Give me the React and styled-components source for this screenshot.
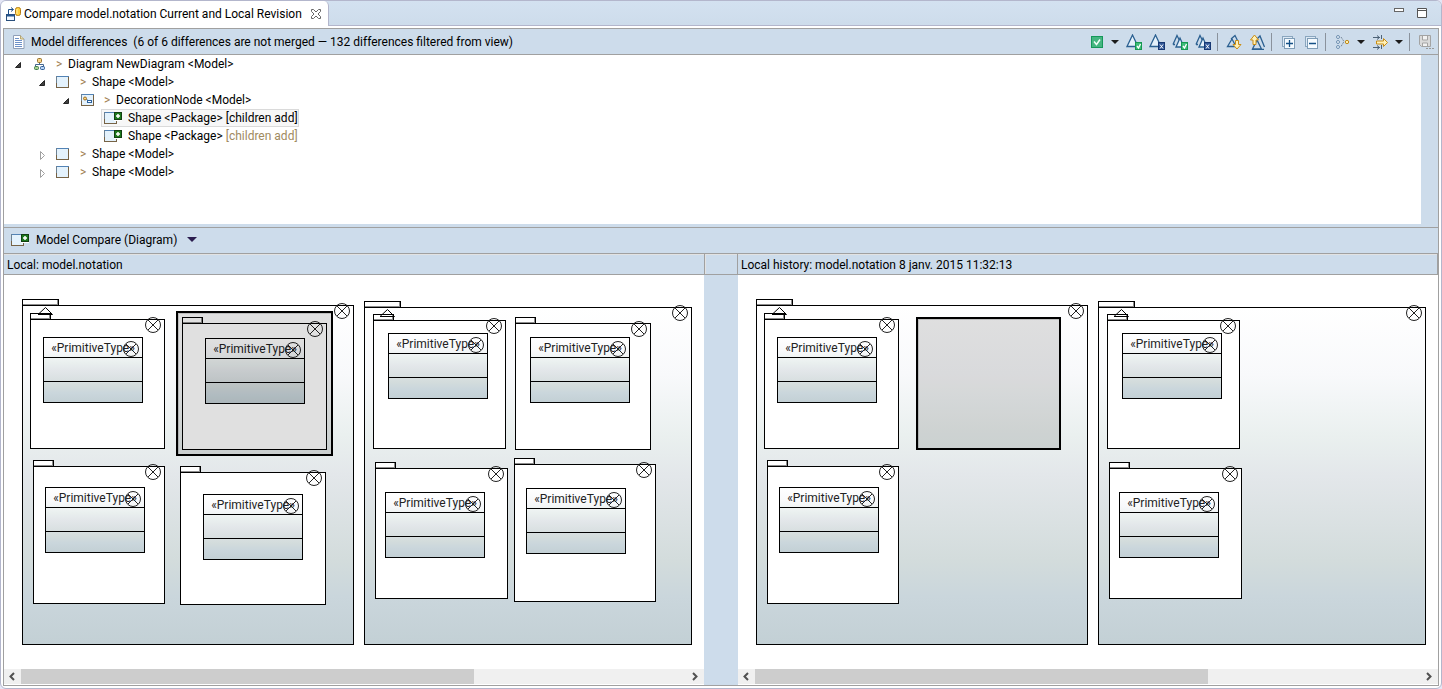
import React, { useState } from "react";
import styled, { createGlobalStyle } from "styled-components";

const GlobalStyle = createGlobalStyle`
  * {
    box-sizing: border-box;
  }
  body {
    margin: 0;
    background: #e4e6f5;
    color: #000;
    font-family: Roboto, "Open Sans", sans-serif;
    font-size: 12px;
    line-height: 16px;
  }
  button {
    font: inherit;
    color: inherit;
    background: none;
    border: none;
    padding: 0;
  }
  svg {
    display: block;
    flex: none;
  }
`;

const Window = styled.div`
  display: flex;
  flex-direction: column;
  min-height: 100vh;
  padding-bottom: 2px;
  background: #fff;
  border: 1px solid #b3b6cc;
  border-radius: 6px;
  overflow: hidden;
`;

const TabBar = styled.header`
  display: flex;
  height: 25px;
  background: linear-gradient(#d3e1f0, #cddceb);
`;

const Tab = styled.div`
  display: flex;
  align-items: center;
  padding: 0 6px 0 4px;
  background: #fff;
  border-right: 1px solid #b3b6cc;
  border-radius: 5px 5px 0 0;
`;

const TabTitle = styled.h1`
  margin: 0 8px 0 3px;
  font-size: 12px;
  font-weight: 400;
  white-space: nowrap;
`;

const TabControls = styled.div`
  display: flex;
  flex: 1;
  align-items: flex-start;
  justify-content: flex-end;
  gap: 13px;
  padding: 7px 13px 0 0;
  border-bottom: 1px solid #b3b6cc;
`;

const Frame = styled.main`
  display: flex;
  flex: 1;
  flex-direction: column;
  margin: 2px 2px 0;
  border: 1px solid #a0a0a0;
`;

const SectionBar = styled.div`
  display: flex;
  align-items: center;
  gap: 5px;
  height: 26px;
  padding-left: 8px;
  background: #cddceb;
  border-bottom: 1px solid #a0a0a0;
`;

const SectionTitle = styled.h2`
  margin: 0;
  font-size: 12px;
  font-weight: 400;
  white-space: pre;
`;

const Toolbar = styled.div`
  display: flex;
  align-items: center;
  margin-left: auto;
  padding-right: 1px;
`;

const Tool = styled.button`
  width: 23px;
  padding: 0 3px 0 4px;
`;

const Caret = styled.button`
  display: flex;
  justify-content: center;
  width: 15px;
`;

const Separator = styled.span`
  width: 1px;
  height: 18px;
  margin: 0 4px 0 3px;
  background: #8a929c;
`;

const TreePanel = styled.div`
  height: 172px;
  padding-right: 17px;
  background: #cddceb;
  border-bottom: 3px solid #cddceb;
`;

const Tree = styled.ul`
  height: 100%;
  margin: 0;
  padding: 0;
  list-style: none;
  background: #fff;
`;

const TreeRow = styled.li`
  display: flex;
  align-items: center;
  height: 18px;
  padding-left: ${(props) => 8 + props.$level * 24}px;
`;

const Expander = styled.button`
  width: 12px;
  height: 12px;
  margin-right: 5px;
`;

const TreeItem = styled.button`
  display: flex;
  align-items: center;
  height: 18px;
  border: 1px solid ${(props) => (props.$selected ? "#dadada" : "transparent")};
  background: ${(props) => (props.$selected ? "#f7f7f7" : "none")};
  white-space: pre;
`;

const TreeIcon = styled.span`
  width: 26px;
`;

const Marker = styled.span`
  width: 12px;
  color: #a08050;
  text-align: left;
`;

const Note = styled.span`
  color: ${(props) => (props.$muted ? "#a08a60" : "#000")};
`;

const CompareBar = styled(SectionBar)`
  gap: 7px;
  height: 27px;
  padding: 0 0 2px 5px;
  border-top: 1px solid #a0a0a0;
`;

const Columns = styled.div`
  display: grid;
  flex: 1;
  grid-template-columns: minmax(0, 1fr) 34px minmax(0, 1fr);
  grid-template-rows: 21px 1fr;
`;

const SideTitle = styled.h3`
  margin: 0;
  padding: 3px 3px 0;
  background: #cddceb;
  border-bottom: 1px solid #a0a0a0;
  box-shadow: inset 0 1px #e2e2e2;
  font-size: 12px;
  font-weight: 400;
  white-space: nowrap;

  &:last-of-type {
    border-right: 1px solid #a0a0a0;
  }
`;

const GutterTitle = styled.div`
  background: #cddceb;
  border: solid #a0a0a0;
  border-width: 0 1px 1px;
  box-shadow: inset 1px 1px #e2e2e2;
`;

const Gutter = styled.div`
  background: #cddceb;
`;

const Side = styled.section`
  display: flex;
  flex-direction: column;
`;

const Canvas = styled.div`
  position: relative;
  flex: 1;
  min-height: 394px;
  overflow: hidden;
  background: #fff;
`;

const Scrollbar = styled.div`
  display: flex;
  height: 16px;
  border-bottom: 1px solid #fff;
  background: #f0f0f0;
`;

const ScrollButton = styled.button`
  display: flex;
  align-items: center;
  justify-content: center;
  width: 17px;
`;

const Track = styled.div`
  flex: 1;
`;

const Thumb = styled.div`
  width: 68%;
  height: 100%;
  background: #cdcdcd;
`;

const shade = "linear-gradient(#fff, #f8f9fb 20%, #eaf0ef 38%, #e3e7ea 50%, #d3dcdc 75%, #cad6dc 86%, #c3d0d5)";

const Node = styled.div`
  position: absolute;
  left: ${(props) => props.$x}px;
  top: ${(props) => props.$y}px;
  width: ${(props) => props.$w}px;
  height: ${(props) => props.$h}px;
`;

const PackageBox = styled(Node)`
  border: 1px solid #000;
  background: ${(props) => (props.$shaded ? shade : "#fff")};
`;

const PackageTab = styled.span`
  position: absolute;
  left: -1px;
  top: -7px;
  width: ${(props) => (props.$wide ? 37 : 21)}px;
  height: 6px;
  border: 1px solid #000;
  border-bottom: none;
  background: #fff;
  box-shadow: inset -1px -1px #8c8c8c;
`;

const ClassBox = styled(Node)`
  display: grid;
  grid-template-rows: 20px 24px 1fr;
  width: 100px;
  height: 66px;
  border: 1px solid #000;
  background: ${shade};
`;

const Compartment = styled.div`
  border-bottom: ${(props) => (props.$last ? "none" : "1px solid #000")};
  color: #222;
  line-height: 20px;
  text-align: center;
  white-space: nowrap;
`;

const Badge = styled.svg`
  position: absolute;
  right: 3px;
  top: ${(props) => props.$top}px;
  z-index: 1;
`;

const Inherit = styled.svg`
  position: absolute;
  left: 14px;
  top: 0;
  z-index: 1;
`;

const Highlight = styled(Node)`
  z-index: 2;
  border: 2px solid #000;
  background: rgba(0, 0, 0, 0.12);
  box-shadow: inset 1px 1px rgba(0, 0, 0, 0.15);
`;

const CompareIcon = () => (
  <svg width="16" height="16">
    <path d="M3.5 9V3.5H8M6 1.5l2.5 2L6 5.5" fill="none" stroke="#1d4f88" />
    <rect x="1.5" y="8.5" width="8" height="6" fill="#f4f9ff" stroke="#2a4f7c" />
    <path d="M2 9.5h7" stroke="#25568f" strokeWidth="2" />
    <rect x="10.5" y="1.5" width="5" height="8" rx="2" fill="#ffcf3f" stroke="#b57b12" />
    <path d="M12 3v5" stroke="#fff2ae" />
  </svg>
);

const CloseIcon = () => (
  <svg width="12" height="12">
    <path
      d="M1.5 1.5h2l2.500 2.500 2.500-2.500h2v2l-2.500 2.500 2.500 2.500v2h-2l-2.500-2.500-2.500 2.500h-2v-2l2.500-2.500-2.500-2.500z"
      fill="#fff"
      stroke="#666"
    />
  </svg>
);

const DocIcon = () => (
  <svg width="14" height="16">
    <path d="M1.500 1.500h7l3.500 3.500v9.500H1.500z" fill="#fff" stroke="#8f9fb8" />
    <path d="M8.500 1.500V5H12" fill="#e8dcae" stroke="#b5a671" />
    <path d="M3 4.500h4M3 6.500h7M3 8.500h7M3 10.500h7M3 12.500h7" stroke="#6d91c8" />
  </svg>
);

const DiagramIcon = () => (
  <svg width="20" height="16">
    <path d="M9.500 6v3M5.500 11V8.500h8V11" fill="none" stroke="#45678f" />
    <rect x="7.500" y="2.500" width="4" height="4" rx="1" fill="#f7d487" stroke="#96702c" />
    <rect x="4.500" y="10.500" width="4" height="3" rx="1" fill="#a9d28e" stroke="#3f7a50" />
    <rect x="10.500" y="10.500" width="4" height="3" rx="1" fill="#b8d3f5" stroke="#2d5d96" />
  </svg>
);

const BoxFrame = ({ x }) => (
  <>
    <rect x={x} y="2" width="13" height="12" fill="#776345" />
    <path d={`M${x} 2.500h13`} stroke="#5383b5" />
    <path d={`M${x + 0.5} 2v7`} stroke="#6d8192" />
    <rect x={x + 1} y="3" width="11" height="10" fill="#e4f2fc" />
  </>
);

const ShapeIcon = () => (
  <svg width="20" height="16">
    <BoxFrame x={2} />
  </svg>
);

const DecorationIcon = () => (
  <svg width="20" height="16">
    <BoxFrame x={3} />
    <path d="M8 7l3 2" stroke="#6b7c91" />
    <circle cx="7" cy="6.500" r="1.500" fill="#ffd67a" stroke="#a16f21" />
    <rect x="9.500" y="8.500" width="4" height="2" fill="#fff" stroke="#2e639f" />
  </svg>
);

const AddedIcon = () => (
  <svg width="20" height="16">
    <BoxFrame x={2} />
    <rect x="12" y="2" width="8" height="9" fill="#fff" />
    <rect x="12.500" y="2.500" width="7" height="7" fill="#1d7a1d" stroke="#123f12" />
    <path d="M16 4v4M14 6h4" stroke="#fff" strokeWidth="1.500" />
  </svg>
);

const OpenArrow = () => (
  <svg width="12" height="12">
    <path d="M8.500 4.500v5h-5z" fill="#404040" stroke="#262626" />
  </svg>
);

const ClosedArrow = () => (
  <svg width="12" height="12">
    <path d="M4.500 3.500v8l4-4z" fill="#fff" stroke="#a0a0a0" />
  </svg>
);

const DownArrow = ({ size = 8, color = "#1c1c1c" }) => (
  <svg width={size} height={size / 2}>
    <path d={`M0 0h${size}l-${size / 2} ${size / 2}z`} fill={color} />
  </svg>
);

const Delta = ({ double, children }) => (
  <svg width="16" height="16" fill="none">
    {double ? (
      <>
        <path d="M1 10.500L5 1.500l3 6M1 10.500h2" stroke="#2b6091" strokeWidth="1.300" />
        <path d="M4 13L8 4l4 9z" fill="#e4f1fb" stroke="#2b6091" strokeWidth="1.300" />
      </>
    ) : (
      <path d="M1 12.500L6.500 1l5.500 11.500z" fill="#e4f1fb" stroke="#2b6091" strokeWidth="1.300" />
    )}
    {children}
  </svg>
);

const AcceptMark = () => (
  <>
    <rect x="9.500" y="8.500" width="6" height="7" fill="#3dbb79" stroke="#159850" />
    <path d="M11 12l1.500 2 2-4" stroke="#fff" strokeWidth="1.300" />
  </>
);

const RejectMark = () => (
  <>
    <rect x="9.500" y="8.500" width="6" height="7" fill="#315898" stroke="#173873" />
    <path d="M11 10.500l3 4M14 10.500l-3 4" stroke="#fff" />
  </>
);

const CheckIcon = () => (
  <svg width="16" height="16" fill="none">
    <rect x="3.500" y="2.500" width="11" height="11" fill="#45b681" stroke="#16985a" />
    <path d="M6 7.500l2.500 3 3.500-5" stroke="#f2fff7" strokeWidth="1.500" />
  </svg>
);

const NextIcon = () => (
  <svg width="16" height="16" fill="none">
    <path d="M1.500 12.500L6 5l4 7.500zM5 5l4-3.500 3 6" stroke="#2b6091" strokeWidth="1.300" />
    <path d="M9.500 6.500h3v4h2.500L11 15l-4-4.500h2.500z" fill="#fff1b8" stroke="#c98d14" />
  </svg>
);

const PreviousIcon = () => (
  <svg width="16" height="16" fill="none">
    <path d="M3.500 15L8 6l4.500 9zM8 5l3-3 4.500 11M3 15.500h12" stroke="#2b6091" strokeWidth="1.300" />
    <path d="M4 10.500V6H1.500L5.500 1l4 5H7v4.500z" fill="#fff1b8" stroke="#c98d14" />
  </svg>
);

const FoldIcon = ({ plus }) => (
  <svg width="16" height="16" fill="none">
    <rect x="2.500" y="2.500" width="10" height="10" fill="#dce9f5" stroke="#8aa6be" />
    <rect x="4.500" y="4.500" width="10" height="10" fill="#f5fbff" stroke="#7f9db7" />
    <path d={plus ? "M6 9.500h7M9.500 6v7" : "M6 9.500h7"} stroke="#145187" strokeWidth="1.300" />
  </svg>
);

const GroupIcon = () => (
  <svg width="16" height="16" fill="none">
    <g fill="#eaf3fb" stroke="#6e8fb0">
      <circle cx="4" cy="3" r="1.500" />
      <circle cx="4" cy="8" r="1.500" />
      <circle cx="4" cy="13" r="1.500" />
    </g>
    <path d="M7 3l3 4.500L7 12.500" stroke="#77889a" strokeDasharray="2 1" />
    <circle cx="13" cy="8" r="1.700" fill="#fff0ae" stroke="#c08a1c" />
  </svg>
);

const FilterIcon = () => (
  <svg width="16" height="16" fill="none">
    <path d="M1 3.500h7M1 13.500h7M5 1.500l2.500 2L5 5.500M5 11.500l2.500 2-2.500 2M9.500 1v4M9.500 11v4" stroke="#4d6276" />
    <path d="M4.500 7h7V4.500L15.500 8.500l-4 4V10h-7z" fill="#fff1b8" stroke="#c98d14" />
  </svg>
);

const SaveIcon = () => (
  <svg width="16" height="16" fill="none">
    <path d="M1.500 1.500h11v11h-9l-2-2z" fill="#dadada" stroke="#a3a3a3" />
    <path d="M4.500 2v4h5V2M4.500 12V9h5v3" fill="#f2f2f2" stroke="#a3a3a3" />
    <path d="M8 14.500h2M11 14.500h2M14 14.500h2" stroke="#999" />
  </svg>
);

const MinimizeIcon = () => (
  <svg width="10" height="4">
    <rect x="0.500" y="0.500" width="9" height="3" fill="#fff" stroke="#666" />
  </svg>
);

const MaximizeIcon = () => (
  <svg width="11" height="11">
    <path d="M0.500 0.500h9v9h-9zM0 2.500h10" fill="#fff" stroke="#555" />
  </svg>
);

const Chevron = ({ right }) => (
  <svg width="9" height="9">
    <path d={right ? "M2 1l3.500 3.500L2 8" : "M6 1L2.500 4.500 6 8"} fill="none" stroke="#505050" strokeWidth="2" />
  </svg>
);

const CrossBadge = ({ top }) => (
  <Badge $top={top} width="16" height="16" fill="none" stroke="#222">
    <circle cx="8" cy="8" r="7.500" />
    <path d="M3 3l10 10M13 3L3 13" />
  </Badge>
);

const PrimitiveType = ({ x, y }) => (
  <ClassBox $x={x} $y={y}>
    <Compartment>«PrimitiveType»</Compartment>
    <Compartment />
    <Compartment $last />
    <CrossBadge top={3} />
  </ClassBox>
);

const Package = ({ x, y, w, h, type }) => (
  <PackageBox $x={x} $y={y} $w={w} $h={h}>
    <PackageTab />
    <CrossBadge top={-3} />
    <PrimitiveType x={type[0]} y={type[1]} />
  </PackageBox>
);

const models = [
  {
    box: { $x: 18, $y: 30, $w: 332, $h: 340 },
    packages: [
      { id: "a1", x: 7, y: 13, w: 135, h: 130, type: [12, 17] },
      { id: "a2", x: 159, y: 17, w: 145, h: 127, type: [22, 14], localOnly: true },
      { id: "a3", x: 10, y: 160, w: 132, h: 138, type: [11, 20] },
      { id: "a4", x: 157, y: 166, w: 146, h: 133, type: [22, 21], localOnly: true },
    ],
  },
  {
    box: { $x: 360, $y: 32, $w: 328, $h: 338 },
    packages: [
      { id: "b1", x: 8, y: 12, w: 133, h: 129, type: [14, 12] },
      { id: "b2", x: 150, y: 15, w: 136, h: 127, type: [14, 13], localOnly: true },
      { id: "b3", x: 10, y: 160, w: 133, h: 131, type: [9, 23] },
      { id: "b4", x: 149, y: 156, w: 142, h: 138, type: [11, 23], localOnly: true },
    ],
  },
];

const tree = [
  { level: 0, open: true, icon: <DiagramIcon />, text: "Diagram NewDiagram <Model>" },
  { level: 1, open: true, icon: <ShapeIcon />, text: "Shape <Model>" },
  { level: 2, open: true, icon: <DecorationIcon />, text: "DecorationNode <Model>" },
  { level: 3, icon: <AddedIcon />, text: "Shape <Package>", note: "[children add]" },
  { level: 3, icon: <AddedIcon />, text: "Shape <Package>", note: "[children add]" },
  { level: 1, open: false, icon: <ShapeIcon />, text: "Shape <Model>" },
  { level: 1, open: false, icon: <ShapeIcon />, text: "Shape <Model>" },
];

const DiagramSide = ({ local, highlight }) => (
  <Side>
    <Canvas>
      {models.map((model) => (
        <PackageBox key={model.box.$x} $shaded {...model.box}>
          <PackageTab $wide />
          <CrossBadge top={-3} />
          <Inherit width="17" height="9" fill="none" stroke="#000">
            <path d="M1 8.500L8.500 1.500 15.500 8.500z" />
          </Inherit>
          {model.packages
            .filter((item) => local || !item.localOnly)
            .map(({ id, localOnly, ...item }) => (
              <Package key={id} {...item} />
            ))}
        </PackageBox>
      ))}
      <Highlight {...highlight} />
    </Canvas>
    <Scrollbar>
      <ScrollButton aria-label="Scroll left">
        <Chevron />
      </ScrollButton>
      <Track>
        <Thumb />
      </Track>
      <ScrollButton aria-label="Scroll right">
        <Chevron right />
      </ScrollButton>
    </Scrollbar>
  </Side>
);

const App = () => {
  const [selected, setSelected] = useState(3);

  return (
    <Window>
      <GlobalStyle />
      <TabBar>
        <Tab>
          <CompareIcon />
          <TabTitle>Compare model.notation Current and Local Revision</TabTitle>
          <button aria-label="Close">
            <CloseIcon />
          </button>
        </Tab>
        <TabControls>
          <button aria-label="Minimize">
            <MinimizeIcon />
          </button>
          <button aria-label="Maximize">
            <MaximizeIcon />
          </button>
        </TabControls>
      </TabBar>
      <Frame>
        <SectionBar>
          <DocIcon />
          <SectionTitle>
            {"Model differences  (6 of 6 differences are not merged — 132 differences filtered from view)"}
          </SectionTitle>
          <Toolbar>
            <Tool aria-label="Merge mode">
              <CheckIcon />
            </Tool>
            <Caret aria-label="Merge mode menu">
              <DownArrow />
            </Caret>
            <Tool aria-label="Accept change">
              <Delta>
                <AcceptMark />
              </Delta>
            </Tool>
            <Tool aria-label="Reject change">
              <Delta>
                <RejectMark />
              </Delta>
            </Tool>
            <Tool aria-label="Accept all changes">
              <Delta double>
                <AcceptMark />
              </Delta>
            </Tool>
            <Tool aria-label="Reject all changes">
              <Delta double>
                <RejectMark />
              </Delta>
            </Tool>
            <Separator />
            <Tool aria-label="Next difference">
              <NextIcon />
            </Tool>
            <Tool aria-label="Previous difference">
              <PreviousIcon />
            </Tool>
            <Separator />
            <Tool aria-label="Expand all">
              <FoldIcon plus />
            </Tool>
            <Tool aria-label="Collapse all">
              <FoldIcon />
            </Tool>
            <Separator />
            <Tool aria-label="Groups">
              <GroupIcon />
            </Tool>
            <Caret aria-label="Groups menu">
              <DownArrow />
            </Caret>
            <Tool aria-label="Filters">
              <FilterIcon />
            </Tool>
            <Caret aria-label="Filters menu">
              <DownArrow />
            </Caret>
            <Separator />
            <Tool aria-label="Save comparison">
              <SaveIcon />
            </Tool>
          </Toolbar>
        </SectionBar>
        <TreePanel>
          <Tree>
            {tree.map((row, index) => (
              <TreeRow key={index} $level={row.level}>
                <Expander aria-label="Toggle" disabled={row.open === undefined}>
                  {row.open === true && <OpenArrow />}
                  {row.open === false && <ClosedArrow />}
                </Expander>
                <TreeItem $selected={selected === index} onClick={() => setSelected(index)}>
                  <TreeIcon>{row.icon}</TreeIcon>
                  {!row.note && <Marker>&gt;</Marker>}
                  {row.text}
                  {row.note && <Note $muted={selected !== index}> {row.note}</Note>}
                </TreeItem>
              </TreeRow>
            ))}
          </Tree>
        </TreePanel>
        <CompareBar>
          <AddedIcon />
          <SectionTitle>Model Compare (Diagram)</SectionTitle>
          <Caret aria-label="Viewer menu">
            <DownArrow size={10} color="#2b1d4f" />
          </Caret>
        </CompareBar>
        <Columns>
          <SideTitle>Local: model.notation</SideTitle>
          <GutterTitle />
          <SideTitle>Local history: model.notation 8 janv. 2015 11:32:13</SideTitle>
          <DiagramSide local highlight={{ $x: 172, $y: 36, $w: 157, $h: 145 }} />
          <Gutter />
          <DiagramSide highlight={{ $x: 178, $y: 42, $w: 145, $h: 133 }} />
        </Columns>
      </Frame>
    </Window>
  );
};

export default App;
